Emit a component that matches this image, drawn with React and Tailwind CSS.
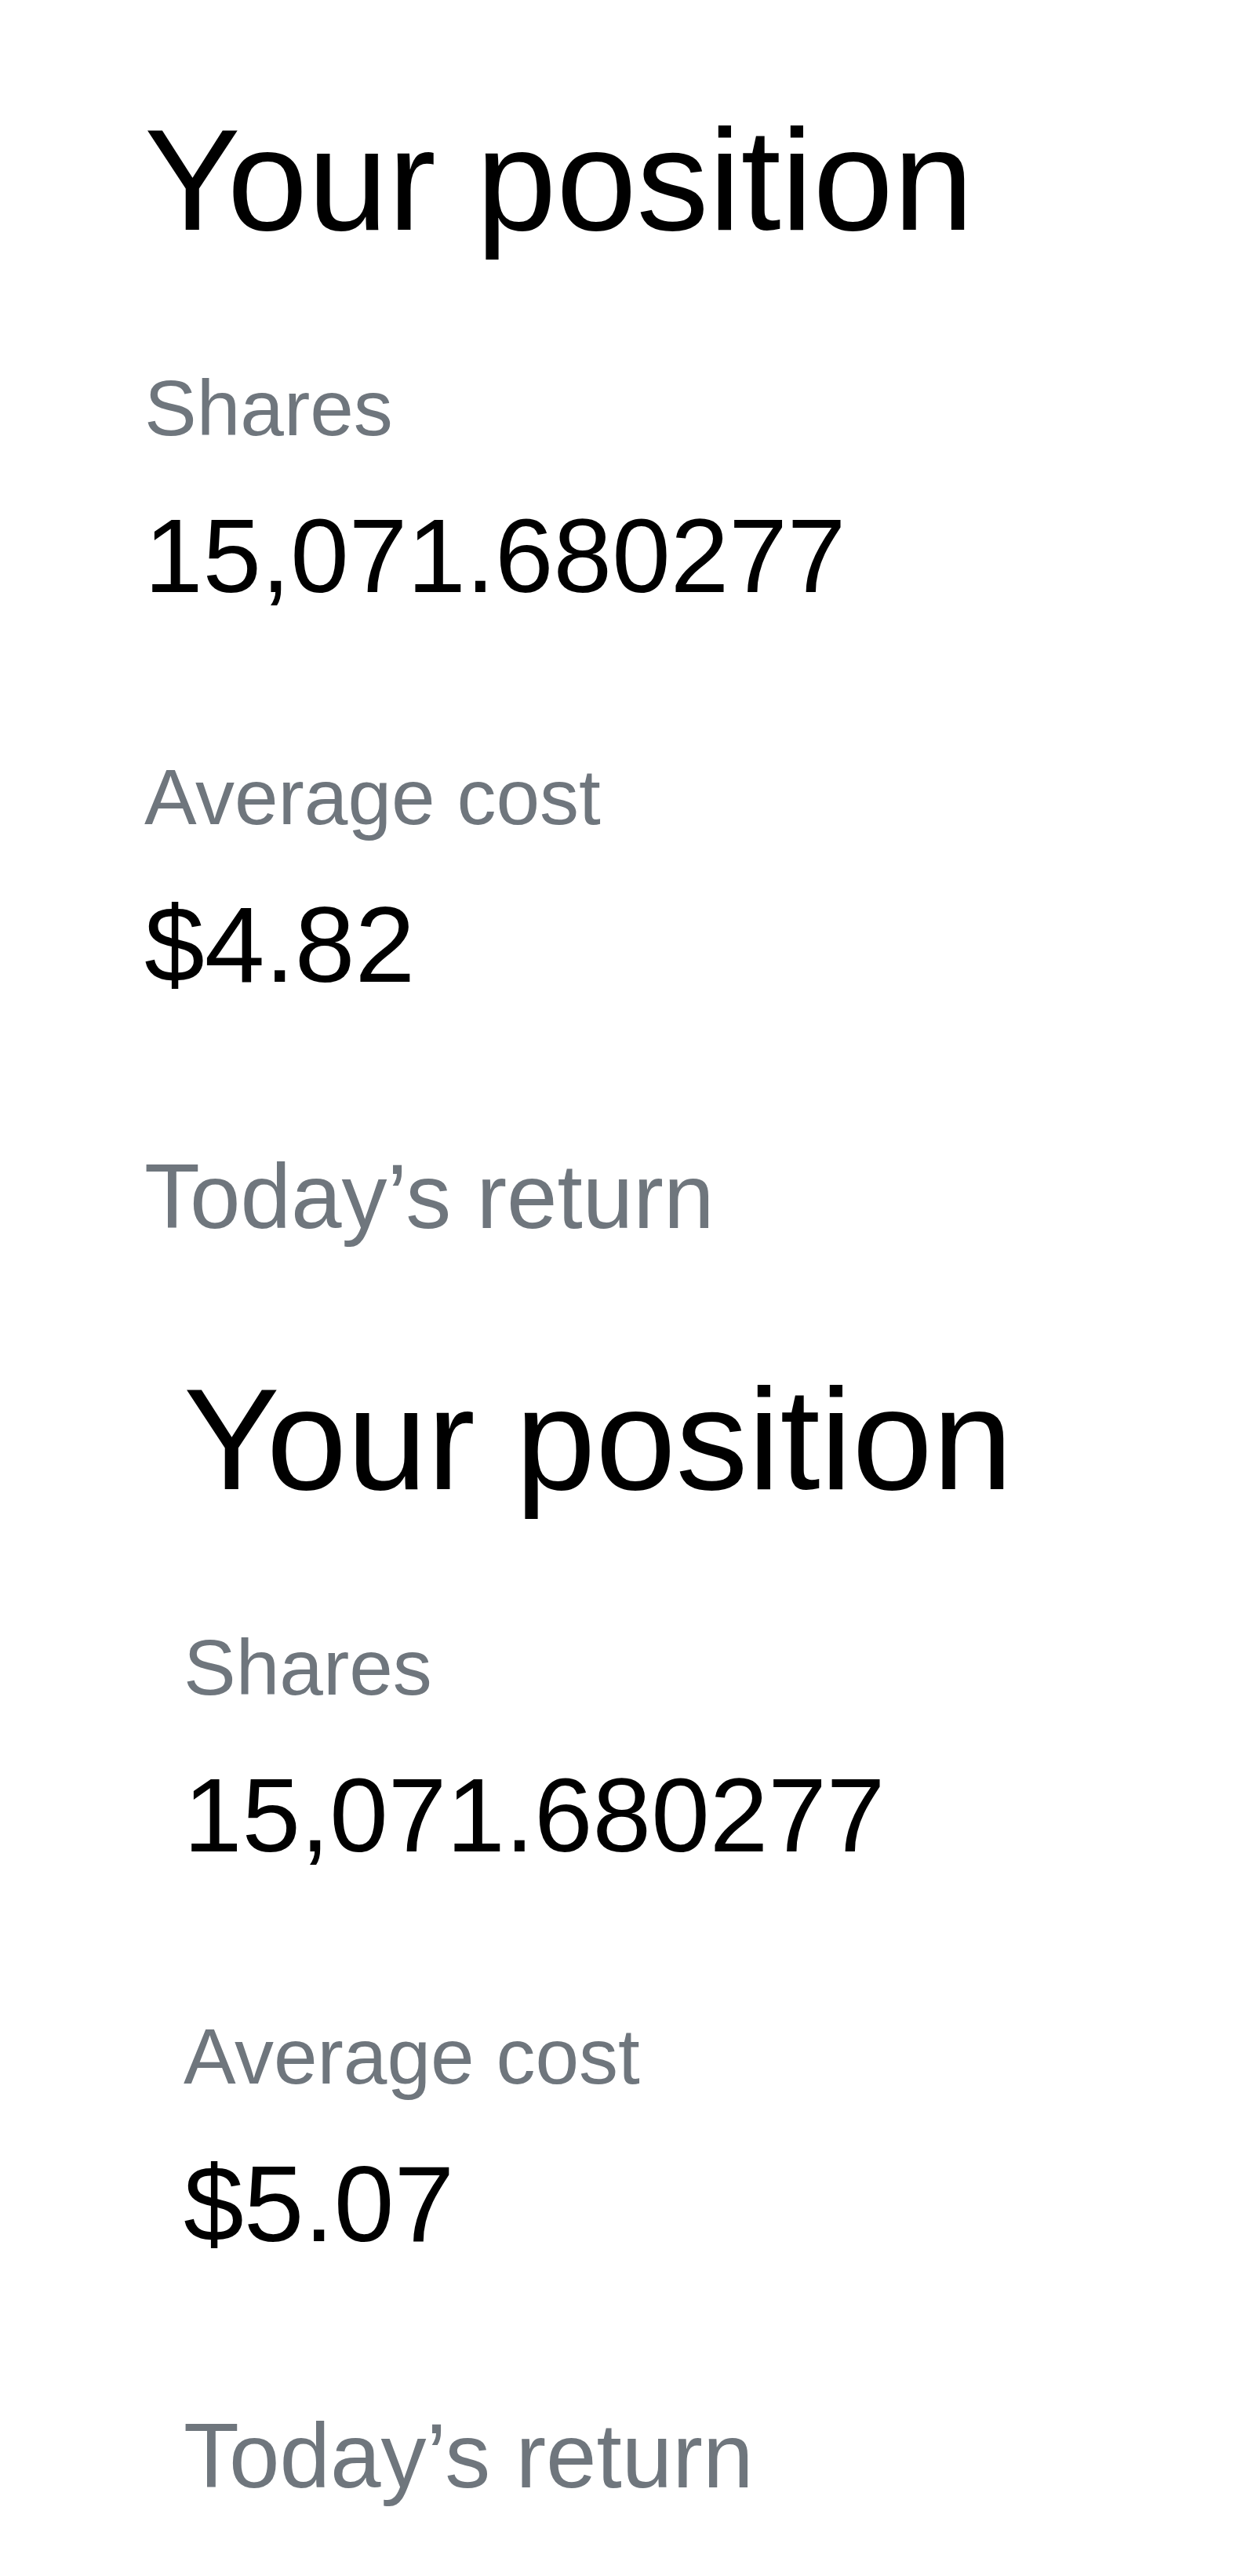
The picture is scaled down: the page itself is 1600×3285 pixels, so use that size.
import React from "react";

function Position({ cost, className }) {
  return (
    <section className={"flex flex-col items-start " + className}>
      <h2 className="text-[184px] leading-none font-normal text-black">Your position</h2>
      <div className="mt-[149px] text-[100px] leading-none text-[#6f767d]">Shares</div>
      <div className="mt-[72px] text-[134px] leading-none text-black">15,071.680277</div>
      <div className="mt-[190px] text-[100px] leading-none text-[#6f767d]">Average cost</div>
      <div className="mt-[69px] text-[138px] leading-none text-black">{cost}</div>
      <div className="mt-[195px] text-[116px] leading-none text-[#6f767d]">Today’s return</div>
    </section>
  );
}

export default function App() {
  return (
    <div className="w-[1600px] h-[3285px] bg-white overflow-hidden font-['Liberation_Sans',Arial,sans-serif]">
      <Position cost="$4.82" className="pt-[137px] pl-[184px]" />
      <Position cost="$5.07" className="mt-[159px] pl-[234px]" />
    </div>
  );
}
